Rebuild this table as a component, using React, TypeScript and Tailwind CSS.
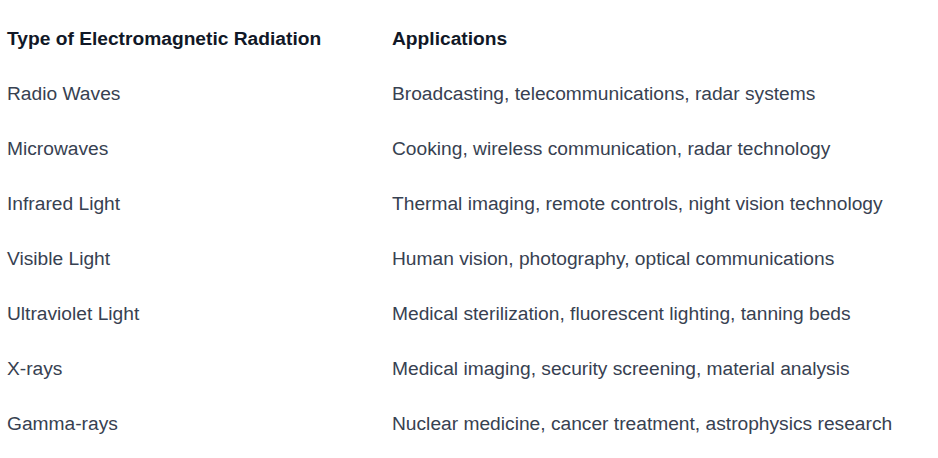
const rows = [
  ['Radio Waves', 'Broadcasting, telecommunications, radar systems'],
  ['Microwaves', 'Cooking, wireless communication, radar technology'],
  ['Infrared Light', 'Thermal imaging, remote controls, night vision technology'],
  ['Visible Light', 'Human vision, photography, optical communications'],
  ['Ultraviolet Light', 'Medical sterilization, fluorescent lighting, tanning beds'],
  ['X-rays', 'Medical imaging, security screening, material analysis'],
  ['Gamma-rays', 'Nuclear medicine, cancer treatment, astrophysics research'],
];

export default function App() {
  return (
    <div className="bg-white w-[938px] h-[458px] pt-[11px] font-['Liberation_Sans',Arial,sans-serif] text-[19.2px] leading-[27px]">
      <div className="grid grid-cols-[384px_1fr]">
        <div className="pl-[7px] pr-2 py-[14px] font-bold text-[#111827]">Type of Electromagnetic Radiation</div>
        <div className="px-2 py-[14px] font-bold text-[#111827]">Applications</div>
        {rows.map(([type, apps]) => (
          <>
            <div key={type} className="pl-[7px] pr-2 py-[14px] text-[#374151]">{type}</div>
            <div key={type + '-a'} className="px-2 py-[14px] text-[#374151]">{apps}</div>
          </>
        ))}
      </div>
    </div>
  );
}
